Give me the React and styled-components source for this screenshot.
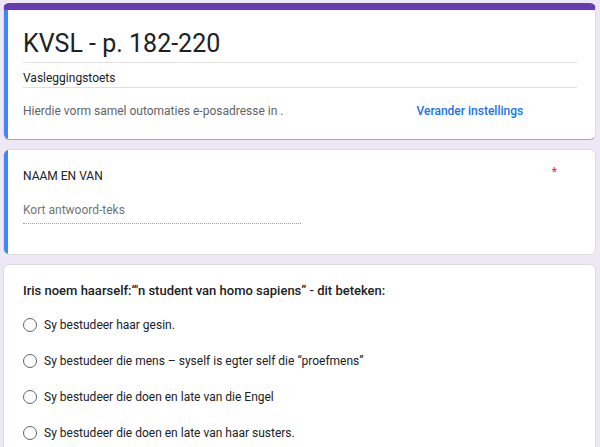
import React from 'react';
import styled, { createGlobalStyle } from 'styled-components';

const GlobalStyle = createGlobalStyle`
  html, body {
    margin: 0;
    padding: 0;
    background: #ede7f6;
    font-family: Roboto, "Liberation Sans", sans-serif;
  }
`;

const Page = styled.main`
  display: flex;
  flex-direction: column;
  gap: 9px;
  padding: 3px 4px 0 3px;
  height: 447px;
  box-sizing: border-box;
  overflow: hidden;
`;

const Card = styled.section`
  position: relative;
  background: #fff;
  border-radius: 6px;
  border: 1px solid #dadce0;
  border-top: ${({ $top }) => ($top ? '7px solid #673ab7' : '1px solid #dadce0')};
  border-bottom: 1.5px solid ${({ $shadow }) => ($shadow ? '#a8a8a8' : '#dadce0')};
  box-sizing: border-box;
  overflow: hidden;
  padding: ${({ $pad }) => $pad || '0'};
  height: ${({ $h }) => $h || 'auto'};
  flex-shrink: 0;

  &::before {
    content: '';
    display: ${({ $accent }) => ($accent ? 'block' : 'none')};
    position: absolute;
    left: 0;
    top: 0;
    bottom: 0;
    width: 4px;
    background: #4285f4;
  }
`;

const Title = styled.h1`
  margin: 0;
  font-size: 25px;
  font-weight: 400;
  color: #202124;
  line-height: 34px;
  padding-bottom: 1px;
  border-bottom: 1px solid #e0e0e0;
`;

const Sub = styled.div`
  font-size: 12px;
  line-height: 14px;
  color: #202124;
  padding: 8px 0 2px;
  border-bottom: 1px solid #e0e0e0;
`;

const Info = styled.div`
  display: flex;
  font-size: 12px;
  line-height: 14px;
  color: #5f6368;
  padding-top: 16px;
`;

const Link = styled.span`
  margin-left: 133px;
  color: #1a73e8;
  font-weight: 500;
`;

const Label = styled.div`
  display: flex;
  justify-content: space-between;
  font-size: 12px;
  color: #202124;
  padding-right: 20px;
`;

const Star = styled.span`
  color: #d93025;
  font-size: 12px;
  margin-top: -4px;
`;

const ShortAnswer = styled.div`
  width: 278px;
  margin-top: 20px;
  font-size: 12px;
  color: #70757a;
  padding-bottom: 6px;
  border-bottom: 1px dotted #9e9e9e;
`;

const Question = styled.div`
  font-size: 13px;
  font-weight: 500;
  color: #202124;
  margin-bottom: 18px;
`;

const Options = styled.div`
  display: flex;
  flex-direction: column;
  gap: 18px;
`;

const Option = styled.label`
  display: flex;
  align-items: center;
  gap: 7px;
  font-size: 12px;
  color: #202124;
  height: 18px;
`;

const Radio = styled.span`
  width: 12px;
  height: 12px;
  border: 1.5px solid #5f6368;
  border-radius: 50%;
  flex-shrink: 0;
`;

const options = [
  'Sy bestudeer haar gesin.',
  'Sy bestudeer die mens \u2013 syself is egter self die \u201cproefmens\u201d',
  'Sy bestudeer die doen en late van die Engel',
  'Sy bestudeer die doen en late van haar susters.',
];

export default function App() {
  return (
    <>
      <GlobalStyle />
      <Page>
        <Card $top $accent $shadow $pad="17px 18px 0 19px" $h="137px">
          <Title>KVSL - p. 182-220</Title>
          <Sub>Vasleggingstoets</Sub>
          <Info>
            Hierdie vorm samel outomaties e-posadresse in .
            <Link>Verander instellings</Link>
          </Info>
        </Card>
        <Card $accent $pad="19px 18px 0 19px" $h="106px">
          <Label>
            NAAM EN VAN
            <Star>*</Star>
          </Label>
          <ShortAnswer>Kort antwoord-teks</ShortAnswer>
        </Card>
        <Card $pad="18px 18px 0 19px" $h="200px">
          <Question>
            Iris noem haarself:&ldquo;'n student van homo sapiens&rdquo; - dit beteken:
          </Question>
          <Options>
            {options.map((o) => (
              <Option key={o}>
                <Radio />
                {o}
              </Option>
            ))}
          </Options>
        </Card>
      </Page>
    </>
  );
}
